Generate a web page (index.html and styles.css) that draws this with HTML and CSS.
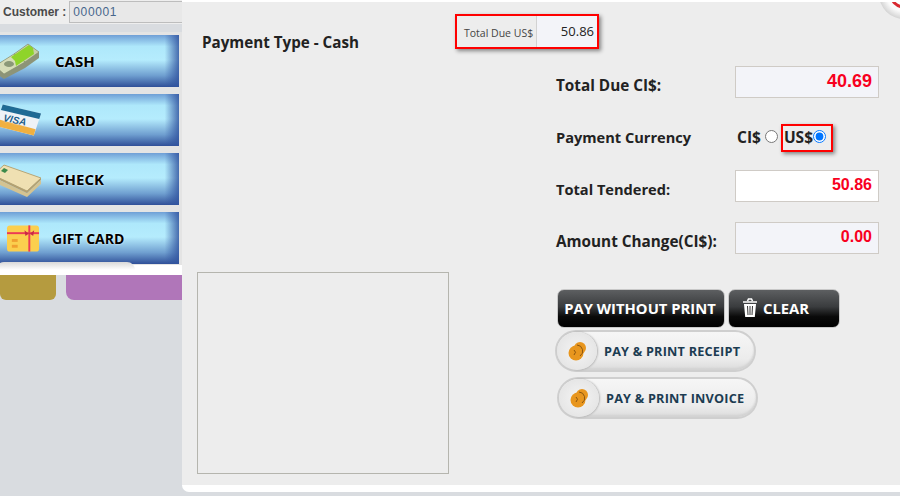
FILE: index.html
```html
<!DOCTYPE html>
<html lang="en">

<head>
  <meta charset="UTF-8">
  <meta name="viewport" content="width=device-width, initial-scale=1.0">
  <title>Payment</title>
  <link rel="stylesheet" href="styles.css">
</head>

<body>
  <aside class="sidebar">
    <div class="customer">
      <label for="customer">Customer :</label>
      <input type="text" id="customer" class="customer-no" value="000001" readonly>
    </div>
    <div class="types">
      <button class="type">
        <svg class="type-icon" viewBox="0 0 40 36" width="40" height="36">
          <path d="M13 11 L27 1 L38 9 L38 15 L24 25 L13 17 Z" fill="#8d9478"/>
          <path d="M13 11 L27 1 L38 9 L24 19 Z" fill="#c8cfa8" stroke="#7f8a68" stroke-width="0.6"/>
          <ellipse cx="25" cy="9" rx="4" ry="2.5" fill="#8b9878"/>
          <path d="M-6 23 L13 11 L24 19 L24 25 L3 36 L-6 30 Z" fill="#8d9478"/>
          <path d="M-6 23 L13 11 L24 19 L3 31 Z" fill="#d6dcb8" stroke="#7f8a68" stroke-width="0.6"/>
          <ellipse cx="8" cy="21" rx="5" ry="3" fill="#8b9878"/>
          <path d="M10 14 L28 2 L32 5 L33 11 L15 23 L14 18 Z" fill="#8fd42a"/>
        </svg>
        <span>CASH</span>
      </button>
      <button class="type">
        <svg class="type-icon" viewBox="0 0 46 36" width="46" height="36">
          <path d="M3 1 L45 11 L37 35 L-6 24 Z" fill="#eef2f6"/>
          <path d="M3 1 L45 11 L43 17 L1 7 Z" fill="#1f6a94"/>
          <path d="M-3 17 L39 28 L37 35 L-6 24 Z" fill="#f0b040"/>
          <text x="3" y="19" class="visa-text" transform="rotate(12 3 19)">VISA</text>
        </svg>
        <span>CARD</span>
      </button>
      <button class="type">
        <svg class="type-icon" viewBox="0 0 40 36" width="40" height="36">
          <path d="M-8 14 L3 4 L40 17 L26 30 Z" fill="#efe0b2" stroke="#b7a677"/>
          <path d="M-8 16 L26 32 L40 19 L40 17 L26 30 L-8 14 Z" fill="#b3a070"/>
          <path d="M-8 21 L26 36 L40 23 L40 19 L26 32 L-8 16 Z" fill="#d4c391"/>
          <path d="M0 10 L3 7 L7 9 L4 12 Z" fill="#3d8a4a"/>
        </svg>
        <span>CHECK</span>
      </button>
      <button class="type type-gift">
        <svg class="type-icon" viewBox="0 0 34 27" width="34" height="27">
          <rect x="0" y="0" width="33" height="27" rx="3" fill="#fbcf4e"/>
          <rect x="0" y="7" width="33" height="2" fill="#ec3a55"/>
          <rect x="22" y="0" width="2" height="27" fill="#ec3a55"/>
          <path d="M18 5 L23 9 L28 5 L27 11 L23 8 L19 11 Z" fill="#c92a45"/>
          <rect x="5" y="14" width="6" height="3" fill="#f0a030"/>
          <rect x="5" y="20" width="6" height="3" fill="#f0a030"/>
        </svg>
        <span>GIFT CARD</span>
      </button>
    </div>
    <div class="strip"></div>
    <div class="tiles">
      <div class="tile tile-gold"></div>
      <div class="tile tile-purple"></div>
    </div>
  </aside>

  <main class="modal">
    <svg class="close" viewBox="0 0 50 50" width="50" height="50">
      <defs>
        <radialGradient id="closeBg">
          <stop offset="0.7" stop-color="#fafafa"/>
          <stop offset="1" stop-color="#d4d4d4"/>
        </radialGradient>
      </defs>
      <circle cx="25" cy="25" r="25" fill="url(#closeBg)"/>
      <circle cx="25" cy="25" r="13" fill="#fff" stroke="#d8282f" stroke-width="3"/>
    </svg>

    <section class="left">
      <h2>Payment Type - Cash</h2>
      <div class="signature"></div>
    </section>

    <section class="right">
      <div class="due-box">
        <label for="dueUs">Total Due US$</label>
        <input type="text" id="dueUs" value="50.86" readonly>
      </div>

      <div class="form">
        <div class="row">
          <label for="dueCi" class="label-wide">Total Due CI$:</label>
          <input type="text" id="dueCi" class="amount amount-big" value="40.69" readonly>
        </div>
        <div class="row row-currency">
          <label>Payment Currency</label>
          <div class="currency">
            <span>CI$</span>
            <input type="radio" name="currency">
            <div class="marked">
              <span>US$</span>
              <input type="radio" name="currency" checked>
            </div>
          </div>
        </div>
        <div class="row">
          <label for="tendered">Total Tendered:</label>
          <input type="text" id="tendered" class="amount amount-white" value="50.86" readonly>
        </div>
        <div class="row">
          <label for="change" class="label-wide">Amount Change(CI$):</label>
          <input type="text" id="change" class="amount" value="0.00" readonly>
        </div>

        <div class="actions">
          <div class="black-row">
            <button class="black black-pay">PAY WITHOUT PRINT</button>
            <button class="black black-clear">
              <svg viewBox="0 0 16 20" width="16" height="20">
                <path d="M1 4 H15 M5.5 3 L6.5 1 H9.5 L10.5 3" fill="none" stroke="#fff" stroke-width="1.6"/>
                <path d="M2 6 H14 L12.8 19 H3.2 Z" fill="#fff"/>
                <path d="M5.5 8 L6 17 M8 8 V17 M10.5 8 L10 17" stroke="#333" stroke-width="1"/>
              </svg>
              <span>CLEAR</span>
            </button>
          </div>
          <button class="pill">
            <span class="pill-icon">
              <svg viewBox="0 0 20 20" width="20" height="20">
                <circle cx="9" cy="12" r="7.5" fill="#e8961e"/>
                <circle cx="13" cy="7" r="6" fill="#e8961e"/>
                <path d="M10 4 A6 6 0 0 1 13 15 M7 9 Q10 11 7 14" fill="none" stroke="#8a5510" stroke-width="1"/>
              </svg>
            </span>
            <span>PAY &amp; PRINT RECEIPT</span>
          </button>
          <button class="pill pill-second">
            <span class="pill-icon">
              <svg viewBox="0 0 20 20" width="20" height="20">
                <circle cx="9" cy="12" r="7.5" fill="#e8961e"/>
                <circle cx="13" cy="7" r="6" fill="#e8961e"/>
                <path d="M10 4 A6 6 0 0 1 13 15 M7 9 Q10 11 7 14" fill="none" stroke="#8a5510" stroke-width="1"/>
              </svg>
            </span>
            <span>PAY &amp; PRINT INVOICE</span>
          </button>
        </div>
      </div>
    </section>
  </main>
</body>

</html>
```

FILE: styles.css
```css
* {
  box-sizing: border-box;
}

html,
body {
  margin: 0;
  height: 496px;
  overflow: hidden;
}

body {
  display: flex;
  align-items: flex-start;
  background-color: #d9dce0;
  font-family: "Open Sans", sans-serif;
}

button {
  font-family: inherit;
  cursor: pointer;
}

/* left side */
.sidebar {
  width: 182px;
  flex-shrink: 0;
  overflow: hidden;
}

.customer {
  display: flex;
  align-items: center;
  height: 24px;
  padding: 1px 0 1px 3px;
  gap: 3px;
  background-color: #eeeeee;
  font-family: "Liberation Sans", sans-serif;
}

.customer label {
  font-size: 12px;
  font-weight: bold;
  color: #4a4a4a;
  white-space: nowrap;
}

.customer-no {
  flex: 1;
  min-width: 0;
  height: 22px;
  padding: 0 3px;
  border: 1px solid #bdbdbd;
  border-right: 0;
  background-color: #e8e8e8;
  color: #47668c;
  font-family: "Liberation Sans", sans-serif;
  font-size: 12px;
  letter-spacing: 0.6px;
}

.types {
  display: flex;
  flex-direction: column;
  gap: 7px;
  margin-top: 8px;
  padding: 3px 3px 1px 0;
  background-color: #e4e4e4;
}

.type {
  display: flex;
  align-items: center;
  gap: 13px;
  height: 52px;
  padding: 0;
  border: 0;
  color: #000;
  font-size: 15px;
  font-weight: 700;
  text-shadow: 0 0 2px #fff;
  background:
    linear-gradient(to right, transparent 92%, rgba(50, 85, 160, 0.85) 100%),
    linear-gradient(#6f9fd6 0, #aee8fb 22%, #b5ecfd 48%, #6f9fd0 78%, #2f4f98 100%);
}

.type-icon {
  flex-shrink: 0;
  width: 42px;
  overflow: visible;
}

.type-gift {
  gap: 12px;
  padding-left: 7px;
  font-size: 14px;
}

.type-gift .type-icon {
  width: 33px;
}

.visa-text {
  font-family: "Liberation Sans", sans-serif;
  font-size: 11px;
  font-weight: bold;
  font-style: italic;
  fill: #1f5f8a;
}

.strip {
  position: relative;
  height: 10px;
  background-color: #fff;
}

.strip::before {
  content: "";
  position: absolute;
  top: -3px;
  left: -4px;
  width: 139px;
  height: 8px;
  border-radius: 14px 14px 0 0;
  background: linear-gradient(#d8d8d8, #ffffff);
}

.tiles {
  display: flex;
  gap: 10px;
  height: 25px;
}

.tile {
  border-radius: 0 0 6px 6px;
}

.tile-gold {
  width: 56px;
  background-color: #b59b3f;
}

.tile-purple {
  flex: 1;
  border-radius: 0 0 0 8px;
  background-color: #b076b9;
}

/* modal */
.modal {
  position: relative;
  display: flex;
  flex: 1;
  gap: 6px;
  height: 492px;
  padding-left: 15px;
  border-top: 2px solid #fff;
  border-bottom: 7px solid #fff;
  border-radius: 0 0 0 7px;
  background-color: #ededed;
  overflow: hidden;
}

.close {
  position: absolute;
  top: -33px;
  right: -29px;
}

.left {
  display: flex;
  flex-direction: column;
  width: 252px;
}

.left h2 {
  margin: 30px 0 0 5px;
  font-size: 15.2px;
  font-weight: 700;
  line-height: 20px;
  color: #222;
}

.signature {
  width: 252px;
  height: 202px;
  margin-top: 220px;
  border: 1px solid #b5b5ae;
}

.right {
  flex: 1;
  padding-top: 12px;
}

.due-box {
  display: flex;
  width: 144px;
  height: 35px;
  border: 2px solid #ff0000;
  box-shadow: 2px 2px 4px rgba(0, 0, 0, 0.45);
}

.due-box label {
  width: 80px;
  padding-left: 7px;
  border-right: 1px solid #d2d2d2;
  font-size: 10.5px;
  line-height: 35px;
  color: #444;
  white-space: nowrap;
}

.due-box input {
  width: 60px;
  padding: 0 3px 2px 0;
  border: 0;
  background-color: #f3f4f9;
  color: #222;
  font-family: "Open Sans", sans-serif;
  font-size: 13px;
  text-align: right;
}

.form {
  margin: 17px 0 0 101px;
}

.row {
  display: flex;
  align-items: center;
  height: 32px;
  margin-bottom: 20px;
}

.row label {
  width: 179px;
  flex-shrink: 0;
  padding-top: 6px;
  font-size: 14.6px;
  font-weight: 700;
  color: #222;
  white-space: nowrap;
}

.row .label-wide {
  font-size: 15.3px;
}

.row-currency {
  margin-top: 24px;
  margin-bottom: 16px;
}

.row-currency label {
  padding-top: 0;
  padding-bottom: 2px;
}

.currency {
  display: flex;
  align-items: center;
  margin-left: 2px;
  font-size: 15.5px;
  font-weight: 700;
  color: #222;
}

.currency span {
  margin-top: -2px;
}

.currency input {
  width: 13px;
  height: 13px;
  margin: -3px 0 0 4px;
}

.marked {
  display: flex;
  align-items: center;
  width: 52px;
  height: 28px;
  margin-left: 3px;
  padding-left: 1px;
  border: 2px solid #ff0000;
  box-shadow: 2px 2px 4px rgba(0, 0, 0, 0.45);
}

.marked input {
  margin-left: 0;
}

.amount {
  width: 144px;
  height: 32px;
  padding: 0 6px 2px 0;
  border: 1px solid #cfcbc6;
  background-color: #f3f4f9;
  color: #f8001e;
  font-family: "Liberation Sans", sans-serif;
  font-size: 16px;
  font-weight: bold;
  text-align: right;
}

.amount-big {
  font-size: 18px;
}

.amount-white {
  background-color: #fff;
}

.actions {
  margin: 35px 0 0 -1px;
}

.black-row {
  display: flex;
  gap: 3px;
  margin-left: 2px;
}

.black {
  display: flex;
  align-items: center;
  height: 39px;
  padding-bottom: 2px;
  border: 1px solid #c8c8c8;
  border-radius: 7px;
  color: #fff;
  font-size: 14.8px;
  font-weight: 700;
  background: linear-gradient(#5d5f61 0, #3a3c3e 45%, #0a0a0a 72%, #000 100%);
}

.black-pay {
  justify-content: center;
  width: 168px;
  padding-left: 0;
  padding-right: 2px;
}

.black-clear {
  gap: 5px;
  width: 112px;
  padding-left: 13px;
  padding-right: 0;
}

.pill {
  display: flex;
  align-items: center;
  width: 201px;
  height: 42px;
  margin-top: 2px;
  padding: 0;
  border: 2px solid #cfcfcf;
  border-radius: 21px;
  color: #1c3c52;
  font-size: 12.7px;
  font-weight: 700;
  letter-spacing: 0.2px;
  background: linear-gradient(#f6f6f6, #ececec 70%, #dcdcdc);
  box-shadow: inset 0 -2px 2px #d2d2d2;
}

.pill-second {
  margin: 5px 0 0 2px;
}

.pill-icon {
  display: flex;
  align-items: center;
  justify-content: center;
  width: 40px;
  height: 38px;
  margin-right: 7px;
  border-radius: 50%;
  box-shadow: 1px 0 2px rgba(0, 0, 0, 0.25);
  background: radial-gradient(#f4f4f4, #e0e0e0);
}
```
